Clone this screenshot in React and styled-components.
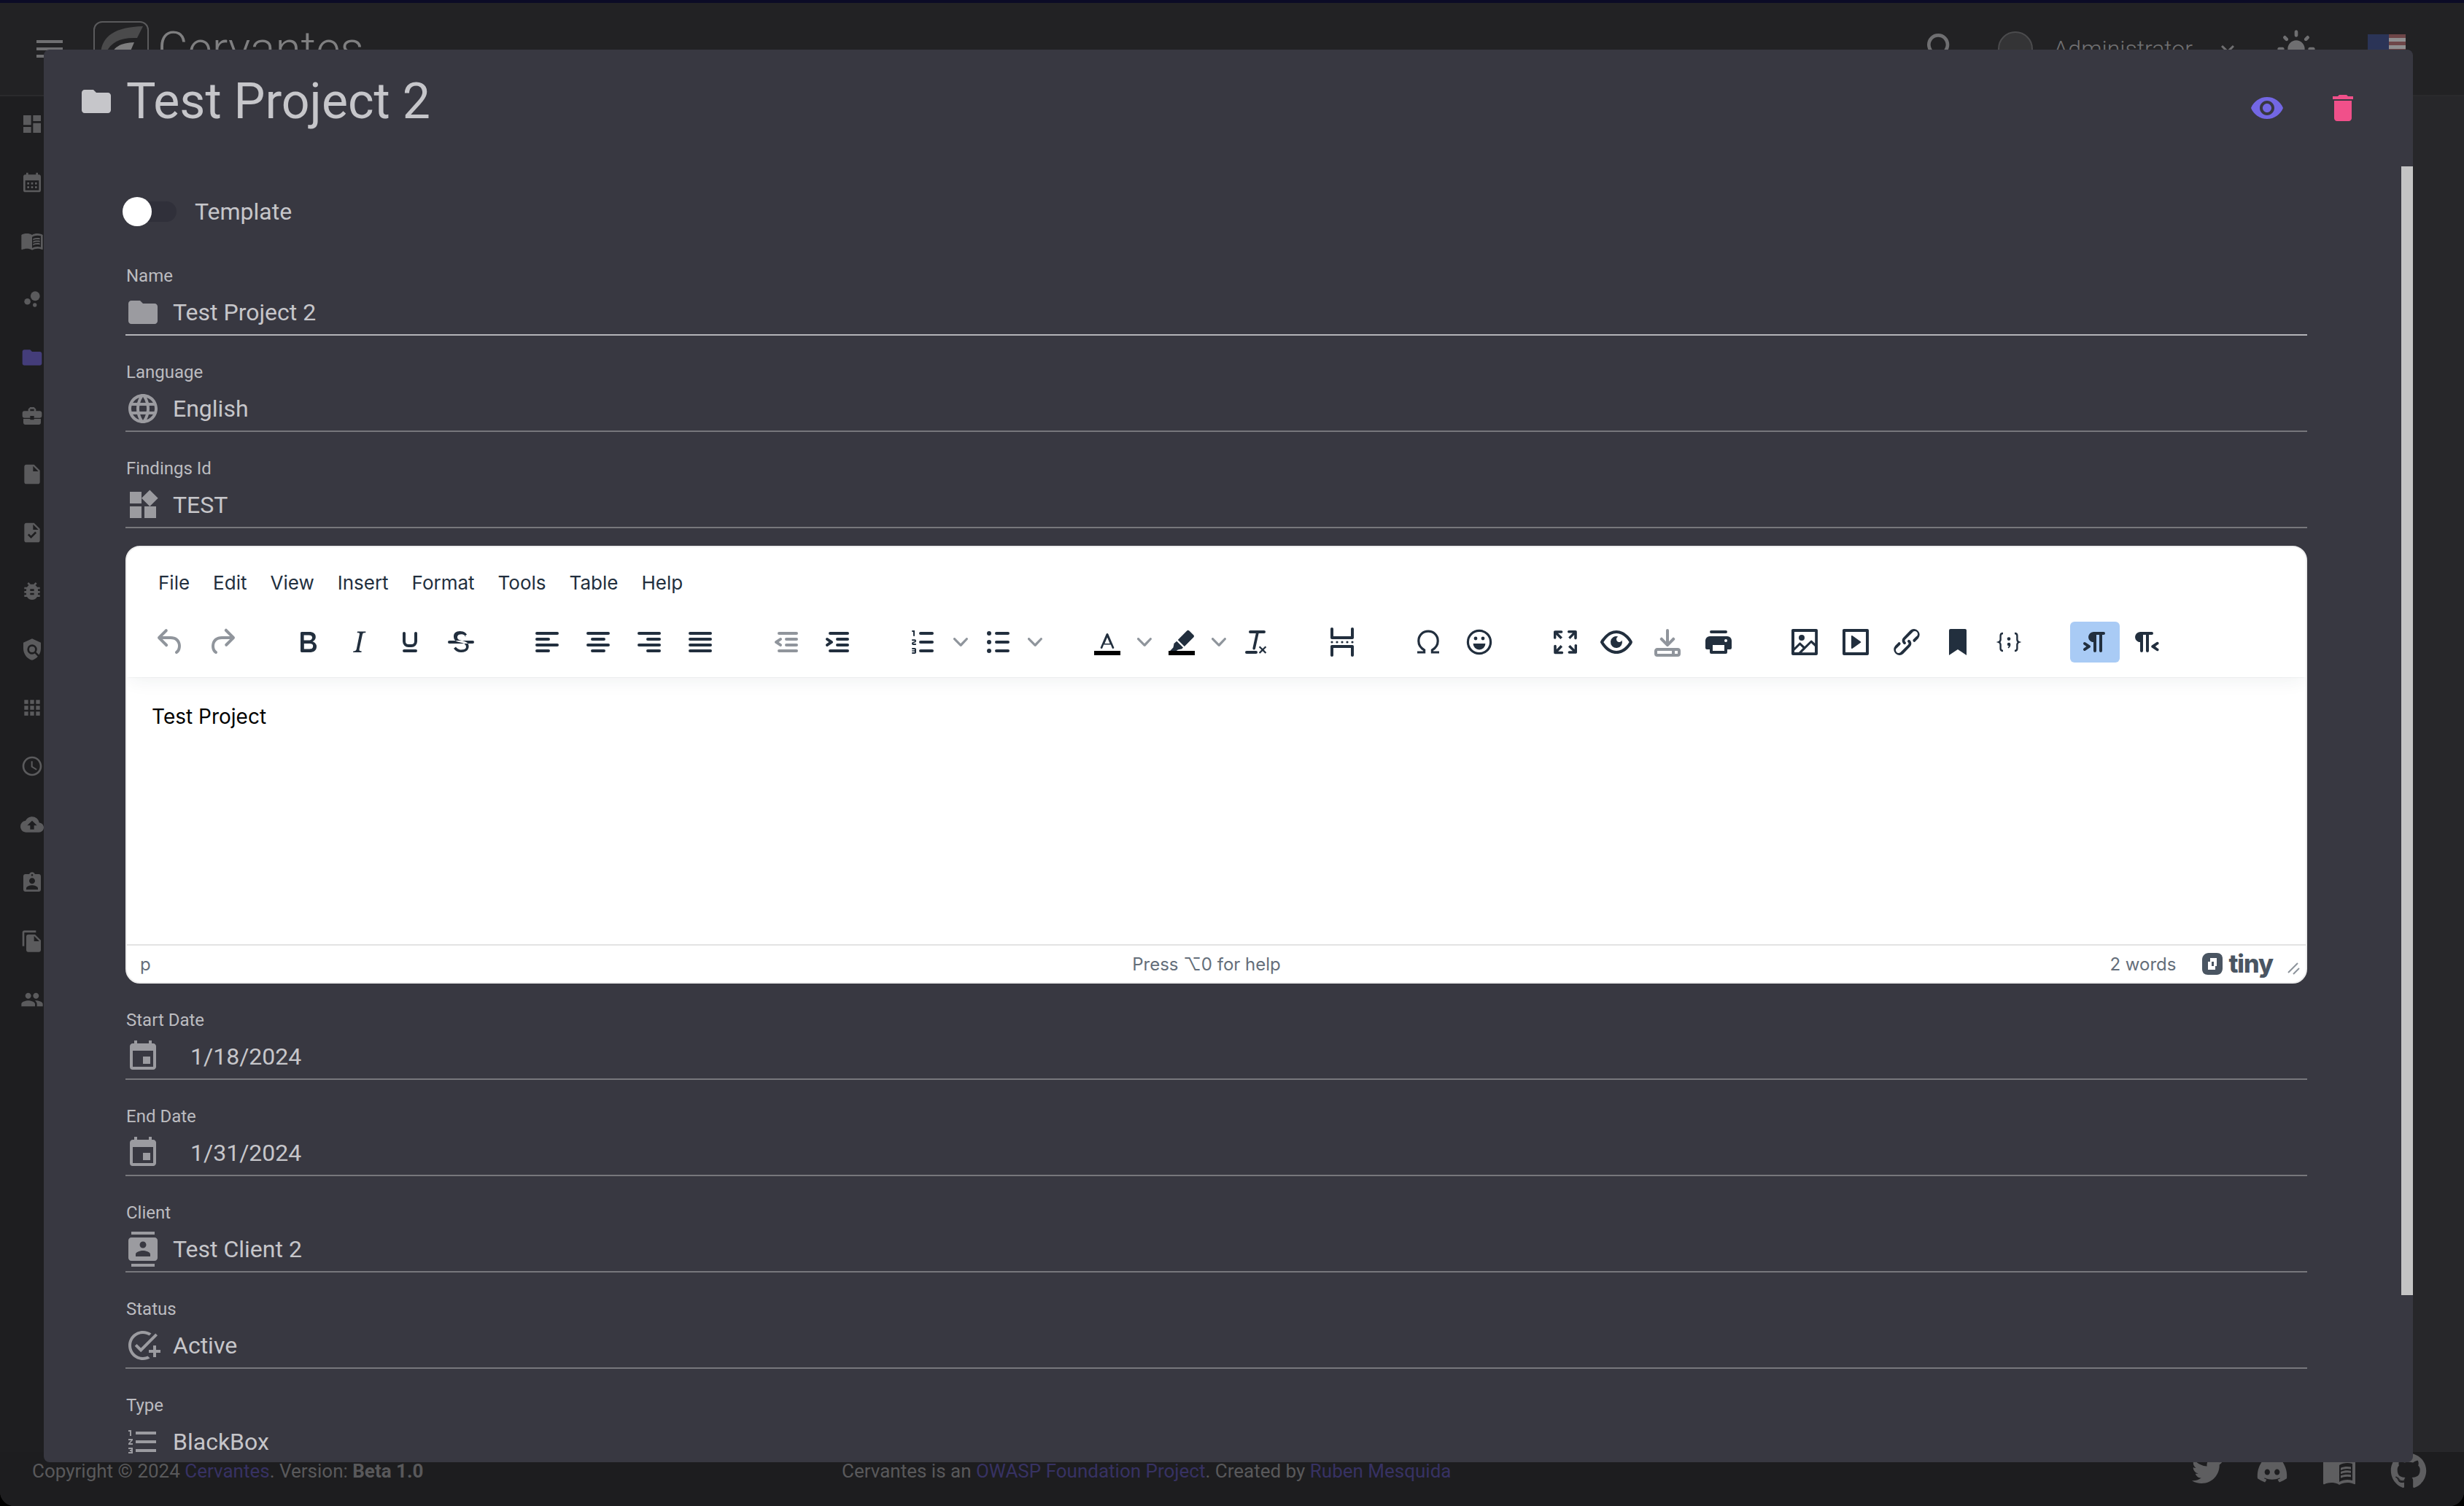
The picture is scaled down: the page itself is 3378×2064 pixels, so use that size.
import React from "react";
import styled, { createGlobalStyle } from "styled-components";
import {
  MdMenu, MdSearch, MdExpandMore, MdLightMode, MdDashboard, MdCalendarMonth, MdMenuBook,
  MdBubbleChart, MdFolder, MdBusinessCenter, MdInsertDriveFile, MdTask, MdBugReport, MdPolicy,
  MdApps, MdAccessTime, MdCloudUpload, MdAssignmentInd, MdFileCopy, MdPeople, MdVisibility,
  MdDelete, MdLanguage, MdWidgets, MdEvent, MdContacts, MdAddTask, MdFormatListNumbered,
} from "react-icons/md";
import { FaTwitter, FaDiscord, FaGithub } from "react-icons/fa";

const GlobalStyle = createGlobalStyle`
  html, body { margin: 0; padding: 0; height: 100%; background: #000; overflow: hidden; }
  * { box-sizing: border-box; }
`;

const sidebarItems = [
  { icon: MdDashboard }, { icon: MdCalendarMonth }, { icon: MdMenuBook }, { icon: MdBubbleChart },
  { icon: MdFolder, active: true }, { icon: MdBusinessCenter }, { icon: MdInsertDriveFile }, { icon: MdTask },
  { icon: MdBugReport }, { icon: MdPolicy }, { icon: MdApps }, { icon: MdAccessTime },
  { icon: MdCloudUpload }, { icon: MdAssignmentInd }, { icon: MdFileCopy }, { icon: MdPeople },
];

const topFields = [
  { label: "Name", value: "Test Project 2", icon: MdFolder, focused: true },
  { label: "Language", value: "English", icon: MdLanguage },
  { label: "Findings Id", value: "TEST", icon: MdWidgets },
];

const bottomFields = [
  { label: "Start Date", value: "1/18/2024", icon: MdEvent, indent: true },
  { label: "End Date", value: "1/31/2024", icon: MdEvent, indent: true },
  { label: "Client", value: "Test Client 2", icon: MdContacts },
  { label: "Status", value: "Active", icon: MdAddTask },
  { label: "Type", value: "BlackBox", icon: MdFormatListNumbered },
];

const menuItems = ["File", "Edit", "View", "Insert", "Format", "Tools", "Table", "Help"];

// TinyMCE toolbar glyphs, 24x24
const glyphs = {
  undo: "M6.4 8H12c3.7 0 6.2 2 6.8 5.1.6 2.7-.4 5.6-2.3 6.8a1 1 0 0 1-1-1.8c1.1-.6 1.8-2.7 1.4-4.6-.5-2.1-2.1-3.5-4.9-3.5H6.4l3.3 3.3a1 1 0 1 1-1.4 1.4l-5-5a1 1 0 0 1 0-1.4l5-5a1 1 0 0 1 1.4 1.4L6.4 8Z",
  redo: "M17.6 10H12c-2.8 0-4.4 1.4-4.9 3.5-.4 2 .3 4 1.4 4.6a1 1 0 1 1-1 1.8c-2-1.2-2.9-4.1-2.3-6.8.6-3 3-5.1 6.8-5.1h5.6l-3.3-3.3a1 1 0 1 1 1.4-1.4l5 5a1 1 0 0 1 0 1.4l-5 5a1 1 0 0 1-1.4-1.4l3.3-3.3Z",
  bold: "M7.8 19c-.3 0-.5 0-.6-.2l-.2-.5V5.7c0-.2 0-.4.2-.5l.6-.2h5c1.5 0 2.7.3 3.5 1 .7.6 1.1 1.4 1.1 2.5a3 3 0 0 1-.6 1.9c-.4.6-1 1-1.6 1.2.4.1.9.3 1.3.6s.8.7 1 1.2c.4.4.5 1 .5 1.6 0 1.3-.4 2.3-1.3 3-.8.7-2.1 1-3.8 1H7.8Zm5-8.3c.6 0 1.2-.1 1.6-.5.4-.3.6-.7.6-1.3 0-1.1-.8-1.7-2.3-1.7H9.3v3.5h3.4Zm.5 6c.7 0 1.3-.1 1.7-.4.4-.4.6-.9.6-1.5s-.2-1-.7-1.4c-.4-.3-1-.4-2-.4H9.4v3.8h4Z",
  italic: "M16.7 4.7l-.1.9h-.3c-.6 0-1 0-1.4.3-.3.3-.4.6-.5 1.1l-2.1 9.8v.6c0 .5.4.8 1.4.8h.2l-.2.8H8l.2-.8h.2c1.1 0 1.8-.5 2-1.5l2-9.8.1-.5c0-.6-.4-.8-1.4-.8h-.3l.2-.9h5.8Z",
  underline: "M16 5c.6 0 1 .4 1 1v5.5a4 4 0 0 1-4 4h-2a4 4 0 0 1-4-4V6c0-.6.4-1 1-1s1 .4 1 1v5.5a2 2 0 0 0 2 2h2a2 2 0 0 0 2-2V6c0-.6.4-1 1-1ZM8 17h8a1 1 0 0 1 0 2H8a1 1 0 0 1 0-2Z",
  strike: "M15.6 8.5c-.5-.7-1-1.1-1.3-1.3-.6-.4-1.3-.6-2-.6-2.7 0-2.8 1.7-2.8 2.1 0 1.6 1.8 2 3.2 2.3 4.4.9 4.6 2.8 4.6 3.9 0 1.4-.7 4.1-5 4.1A6.2 6.2 0 0 1 7 16.4l1.5-1.1c.4.6 1.6 2 3.7 2 1.6 0 2.5-.4 3-1 .5-.8.3-2-.3-2.6-.7-.7-1.7-1.1-3.3-1.4-1.5-.3-2.6-.6-3.5-1.4-.7-.7-1.1-1.6-1.1-2.8 0-2.1 1.4-3.6 4.3-3.6 1.4 0 2.7.4 3.8 1.2l.9 1-1.4 1.3ZM4 11h16a1 1 0 0 1 0 2H4a1 1 0 0 1 0-2Z",
  alignLeft: "M5 5h14a1 1 0 0 1 0 2H5a1 1 0 1 1 0-2Zm0 4h8a1 1 0 0 1 0 2H5a1 1 0 1 1 0-2Zm0 8h8a1 1 0 0 1 0 2H5a1 1 0 0 1 0-2Zm0-4h14a1 1 0 0 1 0 2H5a1 1 0 0 1 0-2Z",
  alignCenter: "M5 5h14a1 1 0 0 1 0 2H5a1 1 0 1 1 0-2Zm3 4h8a1 1 0 0 1 0 2H8a1 1 0 1 1 0-2Zm0 8h8a1 1 0 0 1 0 2H8a1 1 0 0 1 0-2Zm-3-4h14a1 1 0 0 1 0 2H5a1 1 0 0 1 0-2Z",
  alignRight: "M5 5h14a1 1 0 0 1 0 2H5a1 1 0 1 1 0-2Zm6 4h8a1 1 0 0 1 0 2h-8a1 1 0 0 1 0-2Zm0 8h8a1 1 0 0 1 0 2h-8a1 1 0 0 1 0-2Zm-6-4h14a1 1 0 0 1 0 2H5a1 1 0 0 1 0-2Z",
  justify: "M5 5h14a1 1 0 0 1 0 2H5a1 1 0 1 1 0-2Zm0 4h14a1 1 0 0 1 0 2H5a1 1 0 1 1 0-2Zm0 4h14a1 1 0 0 1 0 2H5a1 1 0 0 1 0-2Zm0 4h14a1 1 0 0 1 0 2H5a1 1 0 0 1 0-2Z",
  outdent: "M7 5h12a1 1 0 0 1 0 2H7a1 1 0 1 1 0-2Zm5 4h7a1 1 0 0 1 0 2h-7a1 1 0 0 1 0-2Zm0 4h7a1 1 0 0 1 0 2h-7a1 1 0 0 1 0-2Zm-5 4h12a1 1 0 0 1 0 2H7a1 1 0 0 1 0-2Zm1.6-3.8a1 1 0 0 1-1.2 1.6l-3-2a1 1 0 0 1 0-1.6l3-2a1 1 0 0 1 1.2 1.6L6.8 12l1.8 1.2Z",
  indent: "M7 5h12a1 1 0 0 1 0 2H7a1 1 0 1 1 0-2Zm5 4h7a1 1 0 0 1 0 2h-7a1 1 0 0 1 0-2Zm0 4h7a1 1 0 0 1 0 2h-7a1 1 0 0 1 0-2Zm-5 4h12a1 1 0 0 1 0 2H7a1 1 0 0 1 0-2Zm-2.6-3.8L6.2 12l-1.8-1.2a1 1 0 0 1 1.2-1.6l3 2a1 1 0 0 1 0 1.6l-3 2a1 1 0 1 1-1.2-1.6Z",
  numList: "M10 17h8a1 1 0 0 1 0 2h-8a1 1 0 0 1 0-2Zm0-6h8a1 1 0 0 1 0 2h-8a1 1 0 0 1 0-2Zm0-6h8a1 1 0 0 1 0 2h-8a1 1 0 1 1 0-2ZM6 4v3.5c0 .3-.2.5-.5.5a.5.5 0 0 1-.5-.5V5h-.5a.5.5 0 0 1 0-1H6Zm-1 8.8l.2.2h1.3c.3 0 .5.2.5.5s-.2.5-.5.5H4.9a1 1 0 0 1-.9-1V13c0-.4.3-.8.6-1l1.2-.4.2-.3a.2.2 0 0 0-.2-.2H4.5a.5.5 0 0 1-.5-.5c0-.3.2-.5.5-.5h1.6c.5 0 .9.4.9 1v.1c0 .4-.3.8-.6 1l-1.2.4-.2.3ZM7 17v2c0 .6-.4 1-1 1H4.5a.5.5 0 0 1 0-1h1.2c.2 0 .3-.1.3-.3 0-.2-.1-.3-.3-.3H4.4a.4.4 0 1 1 0-.8h1.3c.2 0 .3-.1.3-.3 0-.2-.1-.3-.3-.3H4.5a.5.5 0 1 1 0-1H6c.6 0 1 .4 1 1Z",
  bullList: "M11 5h8a1 1 0 0 1 0 2h-8a1 1 0 0 1 0-2Zm0 6h8a1 1 0 0 1 0 2h-8a1 1 0 0 1 0-2Zm0 6h8a1 1 0 0 1 0 2h-8a1 1 0 0 1 0-2ZM6 4.5a1.5 1.5 0 1 1 0 3 1.5 1.5 0 0 1 0-3Zm0 6a1.5 1.5 0 1 1 0 3 1.5 1.5 0 0 1 0-3Zm0 6a1.5 1.5 0 1 1 0 3 1.5 1.5 0 0 1 0-3Z",
  textColor: "M11.3 6.5 7.4 15.6c-.2.5.1.9.6.9.3 0 .6-.2.7-.5l.9-2.2h4.8l.9 2.2c.1.3.4.5.7.5.5 0 .8-.4.6-.9L12.7 6.5a.75.75 0 0 0-1.4 0Zm.7 2.2 1.8 4.3h-3.6L12 8.7Z",
  highlight: "M15.6 4.3 10 9.9l-.6.6 4.5 4.5 6.2-6.2c.5-.5.5-1.2 0-1.7l-2.9-2.8c-.5-.5-1.3-.5-1.6 0ZM8.6 11.4l4.4 4.4-1 1-.4-.1-2.2.6-1.3 1H3.8l2.4-2.5.5-2.3-.1-.4 2-1.7Z",
  clear: "M8 4h9.5a1 1 0 0 1 0 2h-3.7l-2.3 10.5a.9.9 0 0 1-1.8-.4L11.9 6H8a1 1 0 0 1 0-2ZM5.5 18h6.5a1 1 0 0 1 0 2H5.5a1 1 0 0 1 0-2Zm9.2-3.3 1.8 1.8 1.8-1.8.8.8-1.8 1.8 1.8 1.8-.8.8-1.8-1.8-1.8 1.8-.8-.8 1.8-1.8-1.8-1.8.8-.8Z",
  pageBreak: "M5 2c.6 0 1 .4 1 1v5h12V3c0-.6.4-1 1-1s1 .4 1 1v6c0 .6-.4 1-1 1H5c-.6 0-1-.4-1-1V3c0-.6.4-1 1-1ZM5 14h14c.6 0 1 .4 1 1v6c0 .6-.4 1-1 1s-1-.4-1-1v-5H6v5c0 .6-.4 1-1 1s-1-.4-1-1v-6c0-.6.4-1 1-1ZM5 11.2a.8.8 0 1 1 0 1.6.8.8 0 0 1 0-1.6Zm3.5 0a.8.8 0 1 1 0 1.6.8.8 0 0 1 0-1.6Zm3.5 0a.8.8 0 1 1 0 1.6.8.8 0 0 1 0-1.6Zm3.5 0a.8.8 0 1 1 0 1.6.8.8 0 0 1 0-1.6Zm3.5 0a.8.8 0 1 1 0 1.6.8.8 0 0 1 0-1.6Z",
  emojiMouth: "M7.8 13h8.4a4.2 4.2 0 0 1-8.4 0ZM9.5 8.3a1.2 1.2 0 1 1 0 2.4 1.2 1.2 0 0 1 0-2.4Zm5 0a1.2 1.2 0 1 1 0 2.4 1.2 1.2 0 0 1 0-2.4Z",
  fullscreen: "M15.3 10l-1.2-1.3 2.9-3h-2.3a.9.9 0 1 1 0-1.7H19c.5 0 .9.4.9.9v4.4a.9.9 0 1 1-1.8 0V7l-2.9 3Zm0 4l3 3v-2.3a.9.9 0 1 1 1.7 0V19c0 .5-.4.9-.9.9h-4.4a.9.9 0 1 1 0-1.8H17l-3-2.9 1.3-1.2ZM10 15.4l-2.9 3h2.3a.9.9 0 1 1 0 1.7H5a.9.9 0 0 1-.9-.9v-4.4a.9.9 0 1 1 1.8 0V17l2.9-3 1.2 1.3ZM8.7 10L5.7 7v2.3a.9.9 0 0 1-1.7 0V5c0-.5.4-.9.9-.9h4.4a.9.9 0 0 1 0 1.8H7l3 2.9-1.3 1.2Z",
  preview: "M3.5 12.5c.5.8 1.1 1.6 1.8 2.3 2 2 4.2 3.2 6.7 3.2s4.7-1.2 6.7-3.2a16.2 16.2 0 0 0 2.1-2.8 15.7 15.7 0 0 0-2.1-2.8c-2-2-4.2-3.2-6.7-3.2a9.3 9.3 0 0 0-6.7 3.2A16.2 16.2 0 0 0 3.2 12c0 .2.2.3.3.5Zm-2.4-1l.7-1.2L4 7.8C6.2 5.4 8.9 4 12 4c3 0 5.8 1.4 8.1 3.8a18.2 18.2 0 0 1 2.8 3.7v1l-.7 1.2-2.1 2.5c-2.3 2.4-5 3.8-8.1 3.8-3 0-5.8-1.4-8.1-3.8a18.2 18.2 0 0 1-2.8-3.7 1 1 0 0 1 0-1Zm12-3.3a2 2 0 1 0 2.7 2.6 4 4 0 1 1-2.6-2.6Z",
  save: "M5 16h14a2 2 0 0 1 2 2v2a2 2 0 0 1-2 2H5a2 2 0 0 1-2-2v-2c0-1.1.9-2 2-2Zm0 2v2h14v-2H5Zm10 0h2v2h-2v-2Zm-4-6.4L8.7 9.3a1 1 0 1 0-1.4 1.4l4 4c.4.4 1 .4 1.4 0l4-4a1 1 0 1 0-1.4-1.4L13 11.6V4a1 1 0 0 0-2 0v7.6Z",
  print: "M7 4h10a1 1 0 0 1 0 2H7a1 1 0 1 1 0-2ZM6 8h12a3 3 0 0 1 3 3v5a1 1 0 0 1-1 1h-2v2a1 1 0 0 1-1 1H7a1 1 0 0 1-1-1v-2H4a1 1 0 0 1-1-1v-5a3 3 0 0 1 3-3Zm2 6v4h8v-4H8Zm9-4a1 1 0 1 0 0 2 1 1 0 0 0 0-2Z",
  image: "M5 15.7l3.3-3.2c.3-.3.7-.3 1 0L12 15l4.1-4c.3-.4.8-.4 1 0l2 1.9V5H5v10.7ZM5 18V19h3l2.8-2.9-2-2L5 17.9Zm14-3l-2.5-2.4-6.4 6.5H19v-4ZM4 3h16c.6 0 1 .4 1 1v16c0 .6-.4 1-1 1H4a1 1 0 0 1-1-1V4c0-.6.4-1 1-1Zm6 8a2 2 0 1 0 0-4 2 2 0 0 0 0 4Z",
  media: "M4 3h16c.6 0 1 .4 1 1v16c0 .6-.4 1-1 1H4a1 1 0 0 1-1-1V4c0-.6.4-1 1-1Zm1 2v14h14V5H5Zm4.8 2.6l5.6 4a.5.5 0 0 1 0 .8l-5.6 4A.5.5 0 0 1 9 16V8a.5.5 0 0 1 .8-.4Z",
  link: "M6.2 12.3a1 1 0 0 1 1.4 1.4l-2 2a2 2 0 1 0 2.6 2.8l4.8-4.8a1 1 0 0 0 0-1.4 1 1 0 1 1 1.4-1.3 2.9 2.9 0 0 1 0 4L9.6 20a3.9 3.9 0 0 1-5.5-5.5l2-2Zm11.6-.6a1 1 0 0 1-1.4-1.4l2-2a2 2 0 1 0-2.6-2.8L11 10.3a1 1 0 0 0 0 1.4 1 1 0 1 1-1.4 1.3 2.9 2.9 0 0 1 0-4L14.4 4a3.9 3.9 0 0 1 5.5 5.5l-2 2Z",
  bookmark: "M6 4v17l6-4 6 4V4c0-.6-.4-1-1-1H7a1 1 0 0 0-1 1Z",
  ltr: "M11 5h7a1 1 0 0 1 0 2h-1v11a1 1 0 0 1-2 0V7h-2v11a1 1 0 0 1-2 0v-6c-.5 0-1 0-1.4-.3A3.4 3.4 0 0 1 7.8 10a3.3 3.3 0 0 1 0-2.8 3.4 3.4 0 0 1 1.8-1.8L11 5ZM4.4 16.2L6.2 15l-1.8-1.2a1 1 0 0 1 1.2-1.6l3 2a1 1 0 0 1 0 1.6l-3 2a1 1 0 1 1-1.2-1.6Z",
  rtl: "M8 5h8a1 1 0 0 1 0 2h-2v11a1 1 0 0 1-2 0V7h-2v11a1 1 0 0 1-2 0v-6c-.5 0-1 0-1.4-.3A3.4 3.4 0 0 1 4.8 10a3.3 3.3 0 0 1 0-2.8 3.4 3.4 0 0 1 1.8-1.8L8 5Zm12 11.2a1 1 0 1 1-1 1.6l-3-2a1 1 0 0 1 0-1.6l3-2a1 1 0 1 1 1 1.6L18.4 15l1.6 1.2Z",
};

const strokeGlyphs = {
  omega: "M4.5 19h4.8v-1.6C6.9 16 5.4 13.8 5.4 11.2c0-3.8 2.9-6.6 6.6-6.6s6.6 2.8 6.6 6.6c0 2.6-1.5 4.8-3.9 6.2V19h4.8",
  emoji: "M12 4.2a7.8 7.8 0 1 1 0 15.6 7.8 7.8 0 0 1 0-15.6Z",
  code: "M8 6c-1.2 0-1.7.6-1.7 1.6v2.6c0 .9-.5 1.5-1.3 1.8.8.3 1.3.9 1.3 1.8v2.6c0 1 .5 1.6 1.7 1.6M16 6c1.2 0 1.7.6 1.7 1.6v2.6c0 .9.5 1.5 1.3 1.8-.8.3-1.3.9-1.3 1.8v2.6c0 1-.5 1.6-1.7 1.6",
};

const toolGroups = [
  [{ d: "undo", off: true }, { d: "redo", off: true }],
  [{ d: "bold" }, { d: "italic" }, { d: "underline" }, { d: "strike" }],
  [{ d: "alignLeft" }, { d: "alignCenter" }, { d: "alignRight" }, { d: "justify" }],
  [{ d: "outdent", off: true }, { d: "indent" }],
  [{ d: "numList", split: true }, { d: "bullList", split: true }],
  [{ d: "textColor", split: true, bar: true }, { d: "highlight", split: true, bar: true }, { d: "clear" }],
  [{ d: "pageBreak" }],
  [{ s: "omega" }, { s: "emoji", d: "emojiMouth" }],
  [{ d: "fullscreen" }, { d: "preview" }, { d: "save", off: true }, { d: "print" }],
  [{ d: "image" }, { d: "media" }, { d: "link" }, { d: "bookmark" }, { s: "code", semi: true }],
  [{ d: "ltr", on: true }, { d: "rtl" }],
];

const Tool = ({ tool }) => {
  const button = (
    <ToolButton $on={tool.on} $off={tool.off}>
      <svg width="48" height="48" viewBox="0 0 24 24" fill="currentColor">
        {tool.s && <path d={strokeGlyphs[tool.s]} fill="none" stroke="currentColor" strokeWidth={tool.s === "code" ? 1.2 : 1.6} />}
        {tool.d && <path d={glyphs[tool.d]} fillRule="evenodd" />}
        {tool.semi && <path d="M12 8.6a1.2 1.2 0 1 1 0 2.4 1.2 1.2 0 0 1 0-2.4Zm0 3.8a1.2 1.2 0 0 1 1.2 1.2c0 1-.5 2-1.4 2.6l-.5-.5c.4-.4.6-.8.7-1.1a1.1 1.1 0 0 1 0-2.2Z" />}
        {tool.bar && <rect x="3" y="18" width="18" height="3" fill="#000" />}
      </svg>
    </ToolButton>
  );
  if (!tool.split) return button;
  return (
    <SplitButton>
      {button}
      <Chevron width="20" height="20" viewBox="0 0 10 10" fill="currentColor">
        <path d="M8.7 2.2c.3-.3.8-.3 1 0 .4.4.4.9 0 1.2L5.7 7.8c-.3.3-.9.3-1.2 0L.2 3.4a.8.8 0 0 1 0-1.2c.3-.3.8-.3 1.1 0L5 6l3.7-3.8Z" />
      </Chevron>
    </SplitButton>
  );
};

const Field = ({ field }) => {
  const Icon = field.icon;
  return (
    <FieldBox $focused={field.focused}>
      <FieldLabel>{field.label}</FieldLabel>
      <FieldControl>
        <Icon size={48} color="#9b9ba0" />
        <FieldValue $indent={field.indent}>{field.value}</FieldValue>
      </FieldControl>
    </FieldBox>
  );
};

const Swoosh = () => (
  <svg width="76" height="76" viewBox="0 0 76 76" fill="none">
    <rect x="1" y="1" width="74" height="74" rx="11" stroke="#5a5a5c" strokeWidth="2" />
    <path d="M10 44C12 20 30 8 68 7L60 23C38 22 24 28 17 44Z" fill="#4a4a4b" />
    <path d="M22 54C26 34 38 30 56 29L50 43C42 43 36 46 33 54Z" fill="#7d7d7e" />
  </svg>
);

const Flag = () => (
  <svg width="52" height="40" viewBox="0 0 52 40">
    <rect width="52" height="40" rx="3" fill="#8f8f90" />
    <rect y="0" width="52" height="5" fill="#6e4648" />
    <rect y="10" width="52" height="5" fill="#6e4648" />
    <rect y="20" width="52" height="5" fill="#6e4648" />
    <rect y="30" width="52" height="5" fill="#6e4648" />
    <rect width="29" height="40" fill="#2b3457" />
  </svg>
);

const TinyMark = () => (
  <svg width="32" height="32" viewBox="0 0 32 32">
    <path d="M11 1h11c5 0 8 3 8 8v13c0 5-3 9-8 9H10c-5 0-8-3-8-8V10c0-5 4-9 9-9Z" fill="#4a5562" />
    <path d="M13 8h9v11h-4v-6h-5V8ZM10 13h5v6h5v5h-10V13Z" fill="#fff" />
    <path d="M15 13h3v6h-3z" fill="#4a5562" />
  </svg>
);

export default function App() {
  return (
    <Shell>
      <GlobalStyle />
      <TopStrip />
      <TopBar>
        <MdMenu size={48} />
        <Brand>
          <Swoosh />
          <BrandName>Cervantes</BrandName>
        </Brand>
        <TopActions>
          <MdSearch size={56} />
          <Avatar />
          <UserName>Administrator</UserName>
          <MdExpandMore size={36} />
          <ThemeIcon><MdLightMode size={56} /></ThemeIcon>
          <Flag />
        </TopActions>
      </TopBar>
      <Middle>
        <Sidebar>
          {sidebarItems.map((item, i) => {
            const Icon = item.icon;
            return (
              <SideIcon key={i} $active={item.active}>
                <Icon size={48} />
              </SideIcon>
            );
          })}
        </Sidebar>
      </Middle>
      <Footer>
        <FooterText>
          Copyright © 2024 <FooterLink>Cervantes</FooterLink>. Version: <b>Beta 1.0</b>
        </FooterText>
        <FooterText>
          Cervantes is an <FooterLink>OWASP Foundation Project</FooterLink>. Created by <FooterLink>Ruben Mesquida</FooterLink>
        </FooterText>
        <FooterIcons>
          <FaTwitter size={42} />
          <FaDiscord size={44} />
          <MdMenuBook size={48} />
          <FaGithub size={50} />
        </FooterIcons>
      </Footer>

      <Modal>
        <ModalHeader>
          <TitleGroup>
            <MdFolder size={48} color="#c6c6ca" />
            <Title>Test Project 2</Title>
          </TitleGroup>
          <HeaderActions>
            <MdVisibility size={48} color="#7367e4" />
            <MdDelete size={48} color="#f0508a" />
          </HeaderActions>
        </ModalHeader>
        <ModalBody>
          <ToggleRow>
            <Toggle>
              <ToggleThumb />
            </Toggle>
            <ToggleLabel>Template</ToggleLabel>
          </ToggleRow>
          {topFields.map((f) => (
            <Field key={f.label} field={f} />
          ))}
          <Editor>
            <EditorHeader>
              <MenuBar>
                {menuItems.map((m) => (
                  <MenuItem key={m}>{m}</MenuItem>
                ))}
              </MenuBar>
              <ToolBar>
                {toolGroups.map((group, i) => (
                  <ToolGroup key={i}>
                    {group.map((tool, j) => (
                      <Tool key={j} tool={tool} />
                    ))}
                  </ToolGroup>
                ))}
              </ToolBar>
            </EditorHeader>
            <EditorContent>Test Project</EditorContent>
            <StatusBar>
              <StatusGrid>
                <StatusText>p</StatusText>
                <StatusText>Press ⌥0 for help</StatusText>
                <StatusRight>
                  <StatusText>2 words</StatusText>
                  <TinyLogo>
                    <TinyMark />
                    <TinyWord>tiny</TinyWord>
                  </TinyLogo>
                </StatusRight>
              </StatusGrid>
              <ResizeHandle width="18" height="18" viewBox="0 0 18 18">
                <path d="M1 14 14 1M8 16l8-8" stroke="#8d949c" strokeWidth="2" fill="none" />
              </ResizeHandle>
            </StatusBar>
          </Editor>
          {bottomFields.map((f) => (
            <Field key={f.label} field={f} />
          ))}
        </ModalBody>
        <ScrollThumb />
      </Modal>
    </Shell>
  );
}

const Shell = styled.div`
  position: relative;
  display: flex;
  flex-direction: column;
  height: 100vh;
  overflow: hidden;
  background: #27272a;
  border-radius: 0 0 20px 20px;
  font-family: Roboto, sans-serif;
`;

const TopStrip = styled.div`
  height: 4px;
  background: #0b0b26;
`;

const TopBar = styled.header`
  display: flex;
  align-items: center;
  height: 128px;
  padding: 0 80px 0 44px;
  background: #222224;
  border-bottom: 2px solid #2a2a2c;
  color: #6f6f71;
`;

const Brand = styled.div`
  display: flex;
  align-items: center;
  gap: 12px;
  margin-left: 36px;
`;

const BrandName = styled.span`
  font-size: 64px;
  font-weight: 300;
  color: #7f7f80;
`;

const TopActions = styled.div`
  display: flex;
  align-items: center;
  margin-left: auto;
  font-weight: 300;

  > svg:first-child {
    margin-right: 48px;
  }
`;

const Avatar = styled.div`
  width: 48px;
  height: 48px;
  border-radius: 50%;
  border: 2px solid #4b4b4d;
  background: #343436;
`;

const UserName = styled.span`
  margin: 0 30px 0 28px;
  font-size: 32px;
  color: #707072;
`;

const ThemeIcon = styled.span`
  display: flex;
  margin: 0 70px 0 48px;
`;

const Middle = styled.div`
  display: flex;
  flex: 1;
  min-height: 0;
`;

const Sidebar = styled.nav`
  display: flex;
  flex-direction: column;
  gap: 32px;
  width: 60px;
  padding: 14px 0 0 28px;
  background: #1e1e20;
  overflow: hidden;
`;

const SideIcon = styled.span`
  display: flex;
  height: 48px;
  color: ${(p) => (p.$active ? "#443d7a" : "#5b5b5d")};
`;

const Footer = styled.footer`
  display: grid;
  grid-template-columns: 1110px auto 1fr;
  align-items: center;
  height: 74px;
  padding: 0 51px 22px 44px;
  background: #1d1d1f;
`;

const FooterText = styled.div`
  font-size: 26px;
  color: #59595b;
  white-space: nowrap;
`;

const FooterLink = styled.span`
  color: #373263;
`;

const FooterIcons = styled.div`
  display: flex;
  align-items: center;
  justify-content: flex-end;
  gap: 46px;
  color: #5e5e60;
`;

const Modal = styled.section`
  position: absolute;
  top: 68px;
  left: 60px;
  display: flex;
  flex-direction: column;
  width: 3248px;
  height: 1936px;
  background: #383841;
  border-radius: 8px;
  overflow: hidden;
`;

const ModalHeader = styled.div`
  display: flex;
  justify-content: space-between;
  flex-shrink: 0;
  height: 122px;
  padding: 47px 72px 0 48px;
`;

const TitleGroup = styled.div`
  display: flex;
  align-items: center;
  gap: 17px;
  height: 48px;
`;

const Title = styled.h1`
  margin: 0;
  font-size: 68px;
  font-weight: 400;
  color: #c6c6ca;
  white-space: nowrap;
`;

const HeaderActions = styled.div`
  display: flex;
  gap: 56px;
  padding-top: 9px;
`;

const ModalBody = styled.div`
  display: flex;
  flex-direction: column;
  gap: 20px;
  padding: 62px 145px 0 112px;
`;

const ToggleRow = styled.div`
  display: flex;
  align-items: center;
  height: 76px;
`;

const Toggle = styled.div`
  position: relative;
  width: 70px;
  height: 28px;
  margin-right: 25px;
  border-radius: 14px;
  background: #30303a;
`;

const ToggleThumb = styled.span`
  position: absolute;
  top: -6px;
  left: -4px;
  width: 40px;
  height: 40px;
  border-radius: 50%;
  background: #fff;
`;

const ToggleLabel = styled.span`
  font-size: 32px;
  color: #c6c6ca;
`;

const FieldBox = styled.div`
  flex-shrink: 0;
  height: 112px;
  padding-top: 18px;
  border-bottom: 2px solid ${(p) => (p.$focused ? "#b4b4b8" : "#77777c")};
`;

const FieldLabel = styled.div`
  height: 24px;
  margin-left: 1px;
  font-size: 24px;
  line-height: 24px;
  color: #bcbcc0;
`;

const FieldControl = styled.div`
  display: flex;
  align-items: center;
  height: 48px;
  margin-top: 14px;
`;

const FieldValue = styled.span`
  margin-left: ${(p) => (p.$indent ? "41px" : "17px")};
  font-size: 32px;
  color: #c6c6ca;
`;

const Editor = styled.div`
  display: flex;
  flex-direction: column;
  flex-shrink: 0;
  height: 600px;
  margin-top: 4px;
  margin-bottom: 0;
  background: #fff;
  border: 2px solid #eee;
  border-radius: 20px;
  overflow: hidden;
  font-family: Inter, sans-serif;
`;

const EditorHeader = styled.div`
  position: relative;
  flex-shrink: 0;
  background: #fff;
  box-shadow: 0 2px 2px -2px rgba(34, 47, 62, 0.1), 0 8px 24px -4px rgba(34, 47, 62, 0.07);
`;

const MenuBar = styled.div`
  display: flex;
  align-items: center;
  height: 96px;
  padding-left: 27px;
`;

const MenuItem = styled.span`
  padding: 0 16px;
  font-size: 26px;
  color: #222f3e;
`;

const ToolBar = styled.div`
  display: flex;
  gap: 48px;
  padding: 6px 0 20px 25px;
`;

const ToolGroup = styled.div`
  display: flex;
`;

const SplitButton = styled.div`
  display: flex;
  align-items: center;
  width: 102px;
`;

const ToolButton = styled.div`
  display: flex;
  align-items: center;
  justify-content: center;
  width: 68px;
  height: 56px;
  margin: 0 1px;
  border-radius: 6px;
  background: ${(p) => (p.$on ? "#a9cbf5" : "transparent")};
  color: ${(p) => (p.$off ? "#9095 9c".replace(" ", "") : "#222f3e")};
`;

const Chevron = styled.svg`
  margin-left: 6px;
  color: #8f959c;
`;

const EditorContent = styled.div`
  flex: 1;
  padding: 34px 34px 0;
  font-size: 28px;
  line-height: 40px;
  color: #000;
`;

const StatusBar = styled.div`
  display: flex;
  align-items: center;
  flex-shrink: 0;
  height: 52px;
  padding: 0 7px 0 18px;
  border-top: 2px solid #e3e3e3;
`;

const StatusGrid = styled.div`
  display: grid;
  grid-template-columns: 1fr auto 1fr;
  align-items: center;
  flex: 1;
`;

const StatusText = styled.span`
  font-size: 24px;
  color: #646e7a;
`;

const StatusRight = styled.div`
  display: flex;
  align-items: center;
  justify-content: flex-end;
  gap: 34px;
`;

const TinyLogo = styled.div`
  display: flex;
  align-items: center;
  gap: 6px;
`;

const TinyWord = styled.span`
  font-size: 34px;
  font-weight: 800;
  letter-spacing: -1px;
  line-height: 32px;
  color: #4a5562;
`;

const ResizeHandle = styled.svg`
  margin-left: 20px;
  margin-top: 14px;
`;

const ScrollThumb = styled.div`
  position: absolute;
  top: 160px;
  right: 0;
  width: 16px;
  height: 1547px;
  background: #c4c4c4;
`;
